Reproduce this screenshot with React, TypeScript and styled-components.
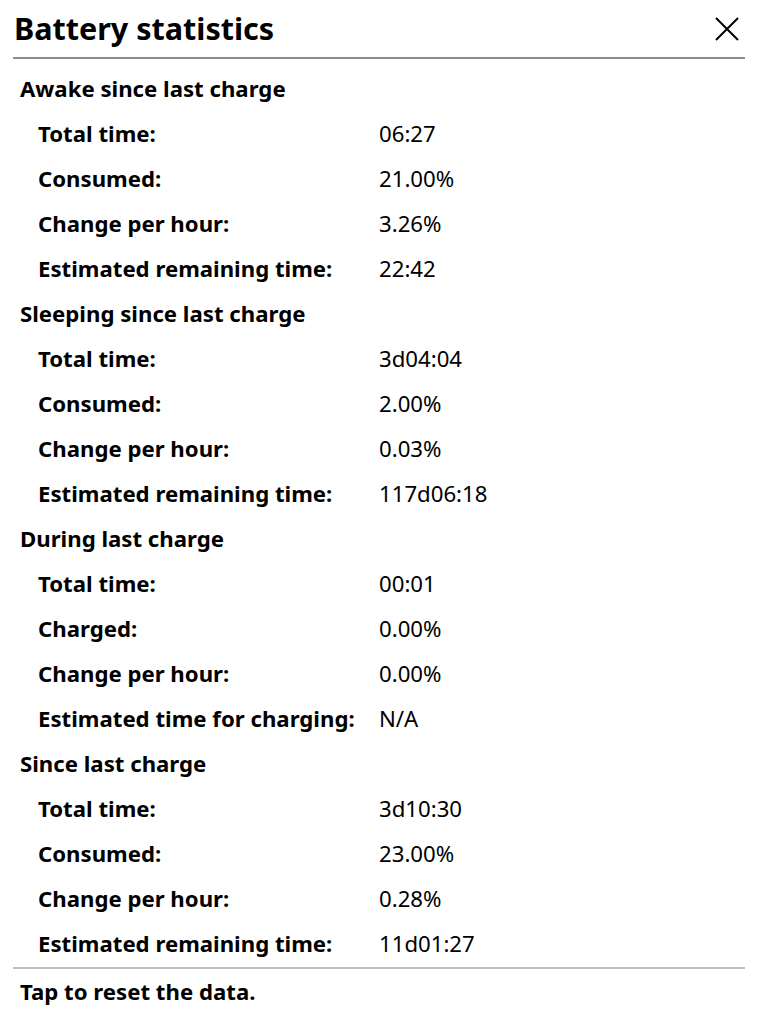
import React from "react";
import styled, { createGlobalStyle } from "styled-components";

const Global = createGlobalStyle`
  html, body { margin: 0; padding: 0; background: #fff; }
  body { font-family: "Noto Sans", sans-serif; color: #000; }
`;

const Page = styled.div`
  width: 758px;
  height: 1024px;
  display: flex;
  flex-direction: column;
  background: #fff;
`;

const TitleBar = styled.div`
  height: 57px;
  display: flex;
  align-items: center;
  justify-content: space-between;
  padding: 0 18px 0 14px;
`;

const Title = styled.h1`
  margin: 0;
  font-size: 30.5px;
  font-weight: 700;
  line-height: 1;
`;

const CloseButton = styled.button`
  border: 0;
  background: none;
  padding: 0;
  width: 26px;
  height: 26px;
  display: flex;
  align-items: center;
  justify-content: center;
`;

const Separator = styled.hr<{ $color: string }>`
  margin: 0 13px;
  border: 0;
  height: 2px;
  background: ${(p) => p.$color};
`;

const List = styled.div`
  display: flex;
  flex-direction: column;
  padding-top: 8px;
`;

const Row = styled.div<{ $header?: boolean }>`
  height: 45px;
  display: grid;
  grid-template-columns: ${(p) => (p.$header ? "1fr" : "341px 1fr")};
  align-items: center;
  padding-left: ${(p) => (p.$header ? "20px" : "38px")};
  font-size: 22.2px;
  line-height: 1;
`;

const Label = styled.span`
  font-weight: 700;
`;

const Value = styled.span`
  font-weight: 400;
`;

const Footer = styled.div`
  height: 46px;
  display: flex;
  align-items: center;
  padding-left: 20px;
  font-size: 22.2px;
  line-height: 1;
  font-weight: 700;
`;

type Section = { title: string; items: [string, string][] };

const sections: Section[] = [
  {
    title: "Awake since last charge",
    items: [
      ["Total time:", "06:27"],
      ["Consumed:", "21.00%"],
      ["Change per hour:", "3.26%"],
      ["Estimated remaining time:", "22:42"],
    ],
  },
  {
    title: "Sleeping since last charge",
    items: [
      ["Total time:", "3d04:04"],
      ["Consumed:", "2.00%"],
      ["Change per hour:", "0.03%"],
      ["Estimated remaining time:", "117d06:18"],
    ],
  },
  {
    title: "During last charge",
    items: [
      ["Total time:", "00:01"],
      ["Charged:", "0.00%"],
      ["Change per hour:", "0.00%"],
      ["Estimated time for charging:", "N/A"],
    ],
  },
  {
    title: "Since last charge",
    items: [
      ["Total time:", "3d10:30"],
      ["Consumed:", "23.00%"],
      ["Change per hour:", "0.28%"],
      ["Estimated remaining time:", "11d01:27"],
    ],
  },
];

export default function App() {
  return (
    <Page>
      <Global />
      <TitleBar>
        <Title>Battery statistics</Title>
        <CloseButton aria-label="Close">
          <svg width="24" height="24" viewBox="0 0 24 24">
            <path d="M1 1 L23 23 M23 1 L1 23" stroke="#000" strokeWidth="2" fill="none" />
          </svg>
        </CloseButton>
      </TitleBar>
      <Separator $color="#8c8c8c" />
      <List>
        {sections.map((s) => (
          <React.Fragment key={s.title}>
            <Row $header>
              <Label>{s.title}</Label>
            </Row>
            {s.items.map(([l, v]) => (
              <Row key={s.title + l}>
                <Label>{l}</Label>
                <Value>{v}</Value>
              </Row>
            ))}
          </React.Fragment>
        ))}
      </List>
      <Separator $color="#bdbdbd" />
      <Footer>Tap to reset the data.</Footer>
    </Page>
  );
}
